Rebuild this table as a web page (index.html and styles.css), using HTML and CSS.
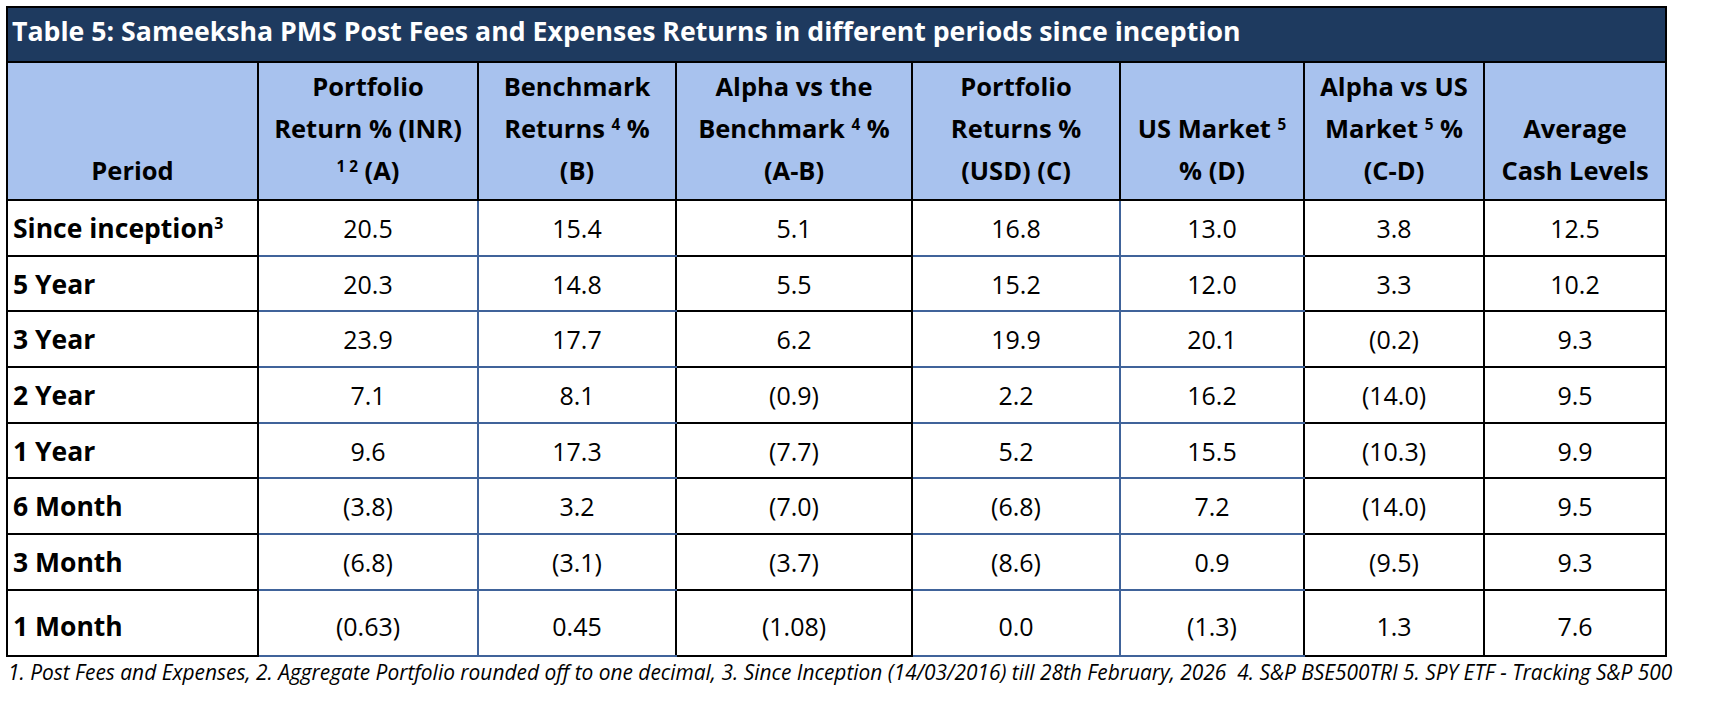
FILE: index.html
```html
<!DOCTYPE html>
<html lang="en">
<head>
<meta charset="utf-8">
<title>Table 5</title>
<link rel="stylesheet" href="styles.css">
</head>
<body>
<div class="page">
<table class="returns">
  <colgroup>
    <col class="c0"><col class="c1"><col class="c2"><col class="c3"><col class="c4"><col class="c5"><col class="c6"><col class="c7">
  </colgroup>
  <thead>
    <tr class="title-row">
      <th colspan="8" class="title">Table 5: Sameeksha PMS Post Fees and Expenses Returns in different periods since inception</th>
    </tr>
    <tr class="head-row">
      <th>Period</th>
      <th>Portfolio<br>Return % (INR)<br><sup>1 2</sup> (A)</th>
      <th>Benchmark<br>Returns <sup>4</sup> %<br>(B)</th>
      <th>Alpha vs the<br>Benchmark <sup>4</sup> %<br>(A-B)</th>
      <th>Portfolio<br>Returns %<br>(USD) (C)</th>
      <th>US Market <sup>5</sup><br>% (D)</th>
      <th>Alpha vs US<br>Market <sup>5</sup> %<br>(C-D)</th>
      <th>Average<br>Cash Levels</th>
    </tr>
  </thead>
  <tbody>
    <tr><td class="label">Since inception<sup>3</sup></td><td class="b">20.5</td><td class="b r">15.4</td><td>5.1</td><td class="b">16.8</td><td class="b r">13.0</td><td>3.8</td><td>12.5</td></tr>
    <tr class="short"><td class="label">5 Year</td><td class="b">20.3</td><td class="b r">14.8</td><td>5.5</td><td class="b">15.2</td><td class="b r">12.0</td><td>3.3</td><td>10.2</td></tr>
    <tr><td class="label">3 Year</td><td class="b">23.9</td><td class="b r">17.7</td><td>6.2</td><td class="b">19.9</td><td class="b r">20.1</td><td>(0.2)</td><td>9.3</td></tr>
    <tr><td class="label">2 Year</td><td class="b">7.1</td><td class="b r">8.1</td><td>(0.9)</td><td class="b">2.2</td><td class="b r">16.2</td><td>(14.0)</td><td>9.5</td></tr>
    <tr class="short"><td class="label">1 Year</td><td class="b">9.6</td><td class="b r">17.3</td><td>(7.7)</td><td class="b">5.2</td><td class="b r">15.5</td><td>(10.3)</td><td>9.9</td></tr>
    <tr><td class="label">6 Month</td><td class="b">(3.8)</td><td class="b r">3.2</td><td>(7.0)</td><td class="b">(6.8)</td><td class="b r">7.2</td><td>(14.0)</td><td>9.5</td></tr>
    <tr><td class="label">3 Month</td><td class="b">(6.8)</td><td class="b r">(3.1)</td><td>(3.7)</td><td class="b">(8.6)</td><td class="b r">0.9</td><td>(9.5)</td><td>9.3</td></tr>
    <tr class="last"><td class="label">1 Month</td><td class="b">(0.63)</td><td class="b r">0.45</td><td>(1.08)</td><td class="b">0.0</td><td class="b r">(1.3)</td><td>1.3</td><td>7.6</td></tr>
  </tbody>
</table>
<p class="notes">1. Post Fees and Expenses, 2. Aggregate Portfolio rounded off to one decimal, 3. Since Inception (14/03/2016) till 28th February, 2026&nbsp; 4. S&amp;P BSE500TRI 5. SPY ETF - Tracking S&amp;P 500</p>
</div>
</body>
</html>
```

FILE: styles.css
```css
html, body {
  margin: 0;
  padding: 0;
  background: #ffffff;
}

body {
  font-family: "Open Sans", "Noto Sans", sans-serif;
  color: #000000;
}

.page {
  padding: 6px 0 0 6px;
}

.returns {
  border-collapse: collapse;
  table-layout: fixed;
  width: 1659px;
}

.c0 { width: 251px; }
.c1 { width: 220px; }
.c2 { width: 198px; }
.c3 { width: 236px; }
.c4 { width: 208px; }
.c5 { width: 184px; }
.c6 { width: 180px; }
.c7 { width: 182px; }

.returns th,
.returns td {
  border: 2px solid #000000;
  padding: 0;
}

.title {
  background: #1e3a5f;
  color: #ffffff;
  font-size: 26.7px;
  font-weight: 700;
  text-align: left;
  vertical-align: top;
  height: 55px;
  box-sizing: border-box;
  padding: 5px 0 0 4px !important;
  line-height: 36px;
}

.head-row th {
  background: #a8c2ee;
  font-size: 25.5px;
  font-weight: 700;
  line-height: 42px;
  vertical-align: bottom;
  text-align: center;
  height: 138px;
  box-sizing: border-box;
  padding-bottom: 8px;
}

sup {
  font-size: 0.6em;
  line-height: 0;
  vertical-align: 0.55em;
}

.returns tbody td {
  font-size: 25px;
  font-weight: 400;
  text-align: center;
  vertical-align: middle;
  height: 56px;
  box-sizing: border-box;
}

.returns tbody tr.short td {
  height: 55px;
}

.returns tbody tr.last td {
  height: 66px;
  padding-top: 6px;
}

.returns tbody td.label {
  font-size: 26.5px;
  font-weight: 700;
  text-align: left;
  padding-left: 5px;
}

.returns tbody td.b {
  border-color: #40639a;
}

.returns tbody td.b.r {
  border-right-color: #000000;
}

.notes {
  margin: 1px 0 0 2px;
  font-size: 20.9px;
  font-style: italic;
  line-height: 28px;
  white-space: nowrap;
}
```
